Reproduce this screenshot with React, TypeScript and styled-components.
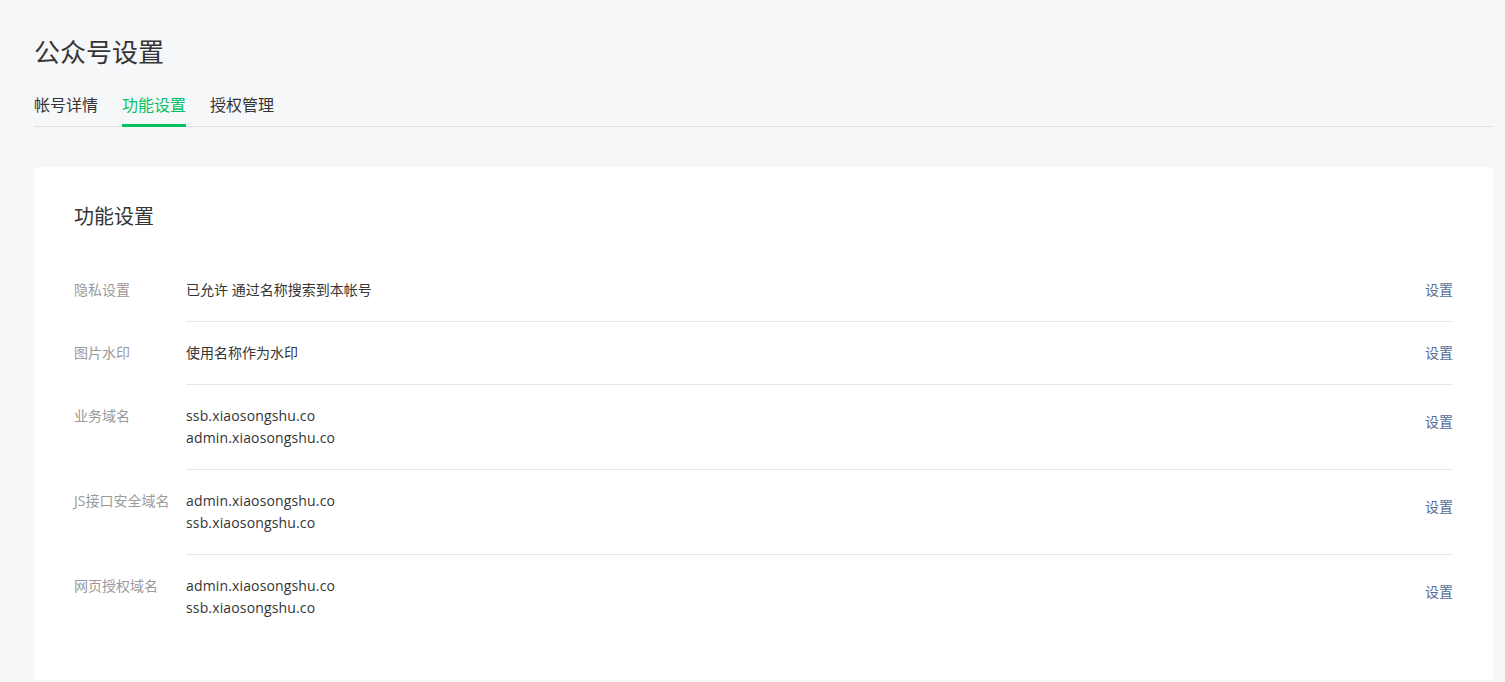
import styled, { createGlobalStyle } from 'styled-components';

const GlobalStyle = createGlobalStyle`
	html, body {
		margin: 0;
		padding: 0;
		background: #f6f7f9;
	}
	body {
		font-family: "Open Sans", "Noto Sans CJK SC", sans-serif;
		color: #353535;
	}
`;

const Page = styled.div`
	padding: 34px 12px 3px 34px;
`;

const PageTitle = styled.h1`
	margin: 0;
	font-size: 26px;
	font-weight: 400;
	line-height: 36px;
	color: #353535;
`;

const Tabs = styled.div`
	display: flex;
	gap: 24px;
	margin-top: 23px;
	border-bottom: 1px solid #e0e1e3;
`;

const Tab = styled.div<{ $active?: boolean }>`
	font-size: 16px;
	line-height: 24px;
	padding-bottom: 7px;
	margin-bottom: -1px;
	color: ${(p) => (p.$active ? '#07c160' : '#353535')};
	border-bottom: 3px solid ${(p) => (p.$active ? '#07c160' : 'transparent')};
`;

const Card = styled.div`
	margin-top: 40px;
	background: #fff;
	border-radius: 4px;
	padding: 40px;
`;

const CardTitle = styled.h2`
	margin: 0 0 32px;
	font-size: 20px;
	font-weight: 400;
	line-height: 20px;
	color: #353535;
`;

const Row = styled.div`
	display: flex;
	align-items: flex-start;
`;

const Label = styled.div`
	width: 112px;
	flex-shrink: 0;
	padding: 20px 0;
	font-size: 14px;
	line-height: 22px;
	color: #9a9a9a;
	white-space: nowrap;
`;

const Body = styled.div<{ $last?: boolean }>`
	flex: 1;
	display: flex;
	align-items: center;
	justify-content: space-between;
	padding: 20px 0;
	border-bottom: 1px solid ${(p) => (p.$last ? 'transparent' : '#e7e7e7')};
`;

const Values = styled.div`
	font-size: 14px;
	line-height: 22px;
	color: #353535;
`;

const Line = styled.div<{ $latin?: boolean }>`
	letter-spacing: ${(p) => (p.$latin ? '0.15px' : '0')};
`;

const Link = styled.a<{ $multi?: boolean }>`
	font-size: 14px;
	line-height: 22px;
	color: #576b95;
	text-decoration: none;
	cursor: pointer;
	margin-bottom: ${(p) => (p.$multi ? '10px' : '0')};
`;

const rows = [
	{ label: '隐私设置', values: ['已允许 通过名称搜索到本帐号'] },
	{ label: '图片水印', values: ['使用名称作为水印'] },
	{ label: '业务域名', values: ['ssb.xiaosongshu.co', 'admin.xiaosongshu.co'] },
	{ label: 'JS接口安全域名', values: ['admin.xiaosongshu.co', 'ssb.xiaosongshu.co'] },
	{ label: '网页授权域名', values: ['admin.xiaosongshu.co', 'ssb.xiaosongshu.co'] },
];

export default function App() {
	return (
		<>
			<GlobalStyle />
			<Page>
				<PageTitle>公众号设置</PageTitle>
				<Tabs>
					<Tab>帐号详情</Tab>
					<Tab $active>功能设置</Tab>
					<Tab>授权管理</Tab>
				</Tabs>
				<Card>
					<CardTitle>功能设置</CardTitle>
					{rows.map((r, i) => (
						<Row key={r.label}>
							<Label>{r.label}</Label>
							<Body $last={i === rows.length - 1}>
								<Values>
									{r.values.map((v) => (
										<Line key={v} $latin={/^[\x00-\x7f]+$/.test(v)}>
											{v}
										</Line>
									))}
								</Values>
								<Link $multi={r.values.length > 1}>设置</Link>
							</Body>
						</Row>
					))}
				</Card>
			</Page>
		</>
	);
}
